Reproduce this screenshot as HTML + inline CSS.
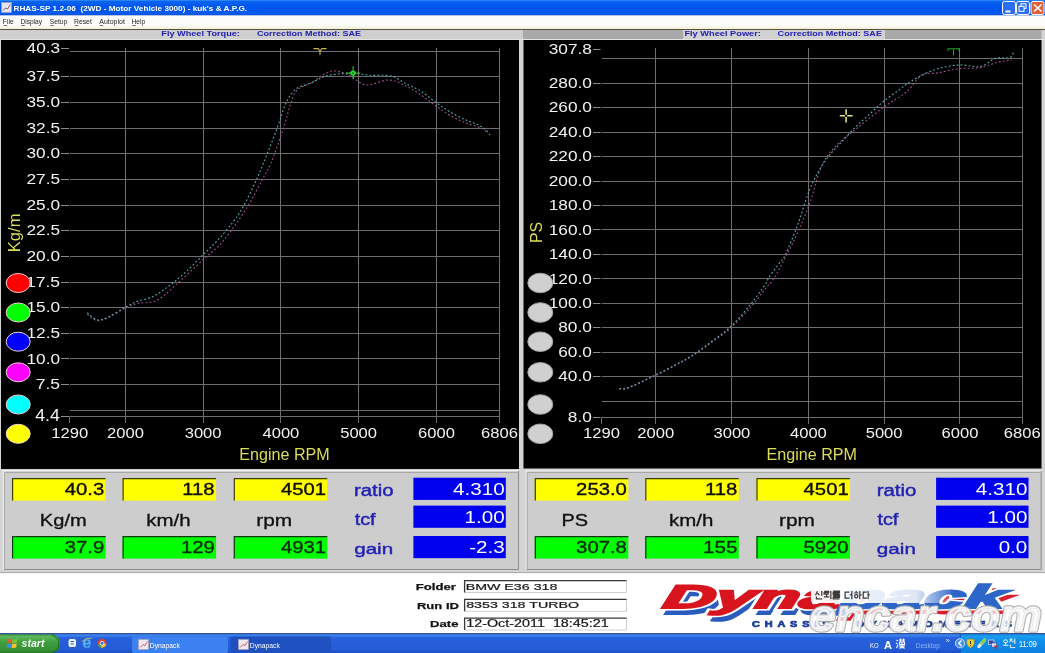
<!DOCTYPE html>
<html><head><meta charset="utf-8"><style>
html,body{margin:0;padding:0;background:#d4d4d4;overflow:hidden;}
svg{display:block;will-change:transform;}
text{font-family:"Liberation Sans", sans-serif;}
</style></head><body>
<svg width="1045" height="653" viewBox="0 0 1045 653">
<rect x="0" y="0" width="1045" height="653" fill="#d4d4d4"/>
<defs>
<linearGradient id="tb" x1="0" y1="0" x2="0" y2="1">
<stop offset="0" stop-color="#3d95ff"/><stop offset="0.08" stop-color="#0a66f0"/>
<stop offset="0.35" stop-color="#0058ee"/><stop offset="0.75" stop-color="#0055ea"/>
<stop offset="0.9" stop-color="#0a5ef0"/><stop offset="1" stop-color="#0040c8"/>
</linearGradient>
<linearGradient id="taskg" x1="0" y1="0" x2="0" y2="1">
<stop offset="0" stop-color="#0c2a72"/><stop offset="0.045" stop-color="#0c2a72"/><stop offset="0.07" stop-color="#3e88f2"/>
<stop offset="0.12" stop-color="#3a80ee"/><stop offset="0.25" stop-color="#2860dc"/><stop offset="0.8" stop-color="#245cd8"/>
<stop offset="1" stop-color="#1e4ec4"/>
</linearGradient>
<linearGradient id="startg" x1="0" y1="0" x2="0" y2="1">
<stop offset="0" stop-color="#3a8a3a"/><stop offset="0.12" stop-color="#5cb85c"/><stop offset="0.4" stop-color="#41a041"/>
<stop offset="0.85" stop-color="#349034"/><stop offset="1" stop-color="#2a7a2a"/>
</linearGradient>
<linearGradient id="trayg" x1="0" y1="0" x2="0" y2="1">
<stop offset="0" stop-color="#1c7ad8"/><stop offset="0.1" stop-color="#18a0f0"/>
<stop offset="0.3" stop-color="#1090ee"/><stop offset="1" stop-color="#0b80e0"/>
</linearGradient>
<linearGradient id="menug" x1="0" y1="0" x2="0" y2="1">
<stop offset="0" stop-color="#fbfdfb"/><stop offset="0.7" stop-color="#fdfdf8"/>
<stop offset="1" stop-color="#f2f0da"/>
</linearGradient>
</defs>
<rect x="0" y="0" width="1045" height="15.5" fill="url(#tb)"/>
<rect x="1.5" y="2.5" width="10" height="10" fill="#e8e4f0" stroke="#a0a0c0" stroke-width="0.6"/>
<path d="M3 10.5 L5.5 8 L7.5 9 L10.5 4.5" stroke="#806070" stroke-width="1" fill="none"/>
<text x="13.47" y="10.82" font-size="7.68" fill="#ffffff" font-weight="bold" textLength="233.67" lengthAdjust="spacingAndGlyphs" xml:space="preserve">RHAS-SP 1.2-06  (2WD - Motor Vehicle 3000) - kuk's &amp; A.P.G.</text>
<rect x="1002.5" y="1.5" width="13" height="13" rx="2" fill="#2a6ef5" stroke="#ffffff" stroke-width="1"/>
<rect x="1016.5" y="1.5" width="13" height="13" rx="2" fill="#2a6ef5" stroke="#ffffff" stroke-width="1"/>
<rect x="1031.0" y="1.5" width="13" height="13" rx="2" fill="#e0603a" stroke="#ffffff" stroke-width="1"/>
<rect x="1005.5" y="10.5" width="5" height="2" fill="#ffffff"/>
<rect x="1021" y="3.8" width="5" height="4.5" fill="none" stroke="#ffffff" stroke-width="1"/>
<rect x="1019" y="6.3" width="5" height="5" fill="#2a6ef5" stroke="#ffffff" stroke-width="1"/>
<path d="M1034 4.5 L1041.5 11.5 M1041.5 4.5 L1034 11.5" stroke="#ffffff" stroke-width="1.6"/>
<rect x="0" y="15.5" width="1045" height="13.5" fill="url(#menug)"/>
<rect x="0" y="29" width="1045" height="1" fill="#55553f"/>
<text x="2.86" y="24.10" font-size="6.67" fill="#252525" textLength="10.85" lengthAdjust="spacingAndGlyphs">File</text>
<rect x="3.6999999999999997" y="25.0" width="3.5" height="0.8" fill="#505050"/>
<text x="20.47" y="24.10" font-size="6.67" fill="#252525" textLength="21.55" lengthAdjust="spacingAndGlyphs">Display</text>
<rect x="21.3" y="25.0" width="3.5" height="0.8" fill="#505050"/>
<text x="49.70" y="24.10" font-size="6.67" fill="#252525" textLength="17.59" lengthAdjust="spacingAndGlyphs">Setup</text>
<rect x="50.3" y="25.0" width="3.5" height="0.8" fill="#505050"/>
<text x="73.95" y="24.10" font-size="6.67" fill="#252525" textLength="17.90" lengthAdjust="spacingAndGlyphs">Reset</text>
<rect x="74.8" y="25.0" width="3.5" height="0.8" fill="#505050"/>
<text x="99.27" y="24.10" font-size="6.67" fill="#252525" textLength="25.60" lengthAdjust="spacingAndGlyphs">Autoplot</text>
<rect x="99.6" y="25.0" width="3.5" height="0.8" fill="#505050"/>
<text x="131.47" y="24.10" font-size="6.67" fill="#252525" textLength="13.61" lengthAdjust="spacingAndGlyphs">Help</text>
<rect x="132.3" y="25.0" width="3.5" height="0.8" fill="#505050"/>
<rect x="0" y="30" width="1045" height="9.5" fill="#cfcfcf"/>
<rect x="523" y="30" width="522" height="9.5" fill="#a9a9a9"/>
<rect x="683" y="30" width="202" height="9.5" fill="#d2d2d2"/>
<rect x="1041.5" y="30" width="3.5" height="9.5" fill="#d4d4d4"/>
<rect x="0" y="39" width="1045" height="1" fill="#e4e4e4"/>
<text x="161.31" y="36.00" font-size="8.12" fill="#2020b4" font-weight="bold" textLength="78.59" lengthAdjust="spacingAndGlyphs">Fly Wheel Torque:</text>
<text x="257.14" y="36.00" font-size="8.12" fill="#2020b4" font-weight="bold" textLength="103.98" lengthAdjust="spacingAndGlyphs">Correction Method: SAE</text>
<text x="684.40" y="36.00" font-size="8.12" fill="#2020b4" font-weight="bold" textLength="76.52" lengthAdjust="spacingAndGlyphs">Fly Wheel Power:</text>
<text x="777.64" y="36.00" font-size="8.12" fill="#2020b4" font-weight="bold" textLength="104.29" lengthAdjust="spacingAndGlyphs">Correction Method: SAE</text>
<rect x="1" y="40" width="518" height="429" fill="#000000"/>
<rect x="523.5" y="40" width="518" height="428.5" fill="#000000"/>
<path d="M70.0 51.5H499.5 M70.0 76.5H499.5 M70.0 102.5H499.5 M70.0 128.5H499.5 M70.0 153.5H499.5 M70.0 179.5H499.5 M70.0 205.5H499.5 M70.0 230.5H499.5 M70.0 256.5H499.5 M70.0 282.5H499.5 M70.0 307.5H499.5 M70.0 333.5H499.5 M70.0 358.5H499.5 M70.0 384.5H499.5 M70.0 410.5H499.5 M69.7 416.5H499.5 M125.5 48V423.0 M203.5 48V423.0 M280.5 48V423.0 M358.5 48V423.0 M436.5 48V423.0 M499.5 48V423.0 M69.5 416.5V423.0" stroke="#6e6e6e" stroke-width="1" fill="none"/>
<path d="M61 48.5H69 M61 76.5H69 M61 102.5H69 M61 128.5H69 M61 153.5H69 M61 179.5H69 M61 205.5H69 M61 230.5H69 M61 256.5H69 M61 282.5H69 M61 307.5H69 M61 333.5H69 M61 358.5H69 M61 384.5H69 M61 416.5H69" stroke="#8c8c8c" stroke-width="1" fill="none"/>
<path d="M601.8 58.5H1022.2 M601.8 83.5H1022.2 M601.8 107.5H1022.2 M601.8 132.5H1022.2 M601.8 156.5H1022.2 M601.8 181.5H1022.2 M601.8 205.5H1022.2 M601.8 229.5H1022.2 M601.8 254.5H1022.2 M601.8 278.5H1022.2 M601.8 303.5H1022.2 M601.8 327.5H1022.2 M601.8 352.5H1022.2 M601.8 376.5H1022.2 M601.8 401.5H1022.2 M601.5 417.5H1022.2 M655.5 48V424.0 M731.5 48V424.0 M808.5 48V424.0 M884.5 48V424.0 M959.5 48V424.0 M1022.5 48V424.0 M601.5 417.5V424.0" stroke="#6e6e6e" stroke-width="1" fill="none"/>
<path d="M593 49.5H600.5 M593 83.5H600.5 M593 107.5H600.5 M593 132.5H600.5 M593 156.5H600.5 M593 181.5H600.5 M593 205.5H600.5 M593 229.5H600.5 M593 254.5H600.5 M593 278.5H600.5 M593 303.5H600.5 M593 327.5H600.5 M593 352.5H600.5 M593 376.5H600.5 M593 417.5H600.5" stroke="#8c8c8c" stroke-width="1" fill="none"/>
<text x="26.57" y="52.72" font-size="15.21" fill="#f2f2f2" textLength="33.63" lengthAdjust="spacingAndGlyphs">40.3</text>
<text x="26.48" y="81.45" font-size="15.21" fill="#f2f2f2" textLength="33.63" lengthAdjust="spacingAndGlyphs">37.5</text>
<text x="26.48" y="107.10" font-size="15.21" fill="#f2f2f2" textLength="33.63" lengthAdjust="spacingAndGlyphs">35.0</text>
<text x="26.48" y="132.75" font-size="15.21" fill="#f2f2f2" textLength="33.63" lengthAdjust="spacingAndGlyphs">32.5</text>
<text x="26.48" y="158.40" font-size="15.21" fill="#f2f2f2" textLength="33.63" lengthAdjust="spacingAndGlyphs">30.0</text>
<text x="26.48" y="184.05" font-size="15.21" fill="#f2f2f2" textLength="33.63" lengthAdjust="spacingAndGlyphs">27.5</text>
<text x="26.48" y="209.70" font-size="15.21" fill="#f2f2f2" textLength="33.63" lengthAdjust="spacingAndGlyphs">25.0</text>
<text x="26.48" y="235.35" font-size="15.21" fill="#f2f2f2" textLength="33.63" lengthAdjust="spacingAndGlyphs">22.5</text>
<text x="26.48" y="261.00" font-size="15.21" fill="#f2f2f2" textLength="33.63" lengthAdjust="spacingAndGlyphs">20.0</text>
<text x="26.01" y="286.65" font-size="15.43" fill="#f2f2f2" textLength="34.11" lengthAdjust="spacingAndGlyphs">17.5</text>
<text x="26.48" y="312.30" font-size="15.21" fill="#f2f2f2" textLength="33.63" lengthAdjust="spacingAndGlyphs">15.0</text>
<text x="26.48" y="337.95" font-size="15.21" fill="#f2f2f2" textLength="33.63" lengthAdjust="spacingAndGlyphs">12.5</text>
<text x="26.48" y="363.60" font-size="15.21" fill="#f2f2f2" textLength="33.63" lengthAdjust="spacingAndGlyphs">10.0</text>
<text x="35.74" y="389.25" font-size="15.43" fill="#f2f2f2" textLength="24.37" lengthAdjust="spacingAndGlyphs">7.5</text>
<text x="35.22" y="421.21" font-size="15.65" fill="#f2f2f2" textLength="24.72" lengthAdjust="spacingAndGlyphs">4.4</text>
<text x="548.69" y="53.85" font-size="15.21" fill="#f2f2f2" textLength="43.24" lengthAdjust="spacingAndGlyphs">307.8</text>
<text x="548.69" y="87.85" font-size="15.21" fill="#f2f2f2" textLength="43.24" lengthAdjust="spacingAndGlyphs">280.0</text>
<text x="548.69" y="112.31" font-size="15.21" fill="#f2f2f2" textLength="43.24" lengthAdjust="spacingAndGlyphs">260.0</text>
<text x="548.69" y="136.76" font-size="15.21" fill="#f2f2f2" textLength="43.24" lengthAdjust="spacingAndGlyphs">240.0</text>
<text x="548.69" y="161.22" font-size="15.21" fill="#f2f2f2" textLength="43.24" lengthAdjust="spacingAndGlyphs">220.0</text>
<text x="548.69" y="185.68" font-size="15.21" fill="#f2f2f2" textLength="43.24" lengthAdjust="spacingAndGlyphs">200.0</text>
<text x="548.69" y="210.14" font-size="15.21" fill="#f2f2f2" textLength="43.24" lengthAdjust="spacingAndGlyphs">180.0</text>
<text x="548.69" y="234.60" font-size="15.21" fill="#f2f2f2" textLength="43.24" lengthAdjust="spacingAndGlyphs">160.0</text>
<text x="548.69" y="259.05" font-size="15.21" fill="#f2f2f2" textLength="43.24" lengthAdjust="spacingAndGlyphs">140.0</text>
<text x="548.69" y="283.51" font-size="15.21" fill="#f2f2f2" textLength="43.24" lengthAdjust="spacingAndGlyphs">120.0</text>
<text x="548.69" y="307.97" font-size="15.21" fill="#f2f2f2" textLength="43.24" lengthAdjust="spacingAndGlyphs">100.0</text>
<text x="558.28" y="332.43" font-size="15.21" fill="#f2f2f2" textLength="33.63" lengthAdjust="spacingAndGlyphs">80.0</text>
<text x="558.28" y="356.89" font-size="15.21" fill="#f2f2f2" textLength="33.63" lengthAdjust="spacingAndGlyphs">60.0</text>
<text x="558.28" y="381.34" font-size="15.21" fill="#f2f2f2" textLength="33.63" lengthAdjust="spacingAndGlyphs">40.0</text>
<text x="567.87" y="421.85" font-size="15.21" fill="#f2f2f2" textLength="24.02" lengthAdjust="spacingAndGlyphs">8.0</text>
<text x="51.26" y="437.95" font-size="15.21" fill="#f2f2f2" textLength="36.89" lengthAdjust="spacingAndGlyphs">1290</text>
<text x="107.06" y="437.95" font-size="15.21" fill="#f2f2f2" textLength="36.89" lengthAdjust="spacingAndGlyphs">2000</text>
<text x="184.66" y="437.95" font-size="15.21" fill="#f2f2f2" textLength="36.89" lengthAdjust="spacingAndGlyphs">3000</text>
<text x="262.46" y="437.95" font-size="15.21" fill="#f2f2f2" textLength="36.89" lengthAdjust="spacingAndGlyphs">4000</text>
<text x="340.16" y="437.95" font-size="15.21" fill="#f2f2f2" textLength="36.89" lengthAdjust="spacingAndGlyphs">5000</text>
<text x="418.06" y="437.95" font-size="15.21" fill="#f2f2f2" textLength="36.89" lengthAdjust="spacingAndGlyphs">6000</text>
<text x="481.06" y="437.95" font-size="15.21" fill="#f2f2f2" textLength="36.89" lengthAdjust="spacingAndGlyphs">6806</text>
<text x="583.06" y="437.95" font-size="15.21" fill="#f2f2f2" textLength="36.89" lengthAdjust="spacingAndGlyphs">1290</text>
<text x="637.26" y="437.95" font-size="15.21" fill="#f2f2f2" textLength="36.89" lengthAdjust="spacingAndGlyphs">2000</text>
<text x="713.46" y="437.95" font-size="15.21" fill="#f2f2f2" textLength="36.89" lengthAdjust="spacingAndGlyphs">3000</text>
<text x="789.96" y="437.95" font-size="15.21" fill="#f2f2f2" textLength="36.89" lengthAdjust="spacingAndGlyphs">4000</text>
<text x="865.66" y="437.95" font-size="15.21" fill="#f2f2f2" textLength="36.89" lengthAdjust="spacingAndGlyphs">5000</text>
<text x="941.52" y="437.95" font-size="15.21" fill="#f2f2f2" textLength="36.89" lengthAdjust="spacingAndGlyphs">6000</text>
<text x="1003.76" y="437.95" font-size="15.21" fill="#f2f2f2" textLength="36.89" lengthAdjust="spacingAndGlyphs">6806</text>
<text x="239.21" y="459.50" font-size="16.81" fill="#dcdc58" textLength="90.54" lengthAdjust="spacingAndGlyphs">Engine RPM</text>
<text x="766.51" y="459.50" font-size="16.67" fill="#dcdc58" textLength="90.44" lengthAdjust="spacingAndGlyphs">Engine RPM</text>
<text transform="translate(19.80 252.23) rotate(-90)" font-size="17.10" fill="#dcdc58" textLength="38.67" lengthAdjust="spacingAndGlyphs">Kg/m</text>
<text transform="translate(541.90 242.97) rotate(-90)" font-size="16.67" fill="#dcdc58" textLength="21.15" lengthAdjust="spacingAndGlyphs">PS</text>
<ellipse cx="18.2" cy="283" rx="12" ry="9.5" fill="#ff0000" stroke="#f0d0d0" stroke-width="1"/>
<ellipse cx="18.2" cy="312.5" rx="12" ry="9.5" fill="#00ff00" stroke="#f0d0d0" stroke-width="1"/>
<ellipse cx="18.2" cy="341.7" rx="12" ry="9.5" fill="#0000ff" stroke="#f0d0d0" stroke-width="1"/>
<ellipse cx="18.2" cy="372.3" rx="12" ry="9.5" fill="#ff00ff" stroke="#f0d0d0" stroke-width="1"/>
<ellipse cx="18.2" cy="404.5" rx="12" ry="9.5" fill="#00ffff" stroke="#f0d0d0" stroke-width="1"/>
<ellipse cx="18.2" cy="433.8" rx="12" ry="9.5" fill="#ffff00" stroke="#f0d0d0" stroke-width="1"/>
<ellipse cx="540.3" cy="283" rx="12.5" ry="9.8" fill="#d0d0d0" stroke="#a0a0a0" stroke-width="1"/>
<ellipse cx="540.3" cy="312.5" rx="12.5" ry="9.8" fill="#d0d0d0" stroke="#a0a0a0" stroke-width="1"/>
<ellipse cx="540.3" cy="341.7" rx="12.5" ry="9.8" fill="#d0d0d0" stroke="#a0a0a0" stroke-width="1"/>
<ellipse cx="540.3" cy="372.3" rx="12.5" ry="9.8" fill="#d0d0d0" stroke="#a0a0a0" stroke-width="1"/>
<ellipse cx="540.3" cy="404.5" rx="12.5" ry="9.8" fill="#d0d0d0" stroke="#a0a0a0" stroke-width="1"/>
<ellipse cx="540.3" cy="433.8" rx="12.5" ry="9.8" fill="#d0d0d0" stroke="#a0a0a0" stroke-width="1"/>
<path d="M87.3 314.5 C89.0 315.5 93.6 320.0 97.2 320.5 C100.8 321.0 104.0 319.6 108.7 317.5 C113.4 315.4 120.6 310.3 125.4 308.0 C130.2 305.7 132.2 304.8 137.4 303.5 C142.6 302.2 150.2 303.5 156.6 300.4 C163.0 297.3 167.7 292.0 175.7 285.0 C183.7 278.0 196.4 265.9 204.4 258.5 C212.4 251.1 216.3 249.2 223.5 240.5 C230.7 231.8 241.2 216.6 247.6 206.5 C254.0 196.4 258.1 187.2 262.0 180.0 C265.9 172.8 267.4 171.7 271.0 163.0 C274.6 154.3 280.2 138.0 283.5 128.0 C286.8 118.0 288.7 109.3 291.0 103.0 C293.3 96.7 293.9 93.3 297.2 90.0 C300.6 86.7 305.4 86.1 311.0 83.0 C316.6 79.9 324.8 72.6 331.0 71.2 C337.2 69.9 342.7 72.7 348.5 75.0 C354.3 77.3 359.3 84.2 366.0 85.0 C372.7 85.8 381.8 79.8 388.5 80.0 C395.2 80.2 400.6 83.5 406.0 86.0 C411.4 88.5 416.0 91.7 421.0 95.0 C426.0 98.3 431.0 102.5 436.0 106.0 C441.0 109.5 446.0 113.2 451.0 116.0 C456.0 118.8 461.0 121.0 466.0 123.0 C471.0 125.0 477.3 126.3 481.0 128.0 C484.7 129.7 486.8 132.2 488.0 133.0" stroke="#a0508e" stroke-width="1.1" fill="none" stroke-dasharray="1.8 2.2"/>
<path d="M87.3 312.8 C89.0 314.0 93.6 319.2 97.2 319.9 C100.8 320.5 104.0 318.8 108.7 316.7 C113.4 314.6 120.6 309.7 125.4 307.1 C130.2 304.5 133.2 302.9 137.4 301.3 C141.6 299.7 146.7 299.2 150.8 297.5 C155.0 295.8 158.5 293.4 162.3 290.8 C166.1 288.2 169.7 285.6 173.8 282.2 C178.0 278.8 182.4 275.2 187.2 270.7 C192.0 266.2 197.4 260.5 202.5 255.4 C207.6 250.3 212.7 245.7 217.8 240.1 C222.9 234.5 228.9 227.4 233.1 221.9 C237.3 216.4 239.3 213.5 243.0 207.0 C246.7 200.5 251.6 190.3 255.0 183.0 C258.4 175.7 259.8 172.2 263.5 163.0 C267.2 153.8 273.5 138.0 277.2 128.0 C281.0 118.0 282.9 109.5 286.0 103.0 C289.1 96.5 291.8 92.3 296.0 89.0 C300.2 85.7 306.0 85.2 311.0 83.0 C316.0 80.8 320.6 77.6 326.0 76.0 C331.4 74.4 339.0 74.0 343.5 73.5 C348.0 73.0 348.7 72.7 353.0 73.0 C357.3 73.3 363.0 74.7 369.3 75.2 C375.6 75.7 384.9 74.6 391.0 76.0 C397.1 77.4 401.0 81.2 406.0 83.8 C411.0 86.3 416.0 88.1 421.0 91.2 C426.0 94.4 431.0 99.0 436.0 102.5 C441.0 106.0 446.0 109.6 451.0 112.5 C456.0 115.4 461.4 117.9 466.0 120.0 C470.6 122.1 475.2 123.3 478.5 125.0 C481.8 126.7 484.1 128.3 486.0 130.0 C487.9 131.7 489.3 134.2 490.0 135.0" stroke="#5aacac" stroke-width="1.1" fill="none" stroke-dasharray="1.8 2.2"/>
<path d="M619.3 389.0 C620.7 388.9 622.5 390.1 627.9 388.2 C633.3 386.3 643.6 381.3 651.5 377.5 C659.4 373.7 668.2 369.2 675.0 365.6 C681.8 362.0 686.1 359.9 692.2 356.0 C698.3 352.1 705.1 347.2 711.5 342.5 C717.9 337.8 724.4 333.8 730.8 328.0 C737.2 322.2 744.4 314.5 750.1 308.0 C755.8 301.5 761.0 294.2 765.1 289.0 C769.2 283.8 769.7 285.4 774.7 277.0 C779.7 268.6 789.1 250.8 794.9 238.5 C800.7 226.2 805.3 215.2 809.6 203.5 C813.9 191.8 816.6 177.8 820.6 168.6 C824.6 159.4 827.1 155.4 833.5 148.4 C839.9 141.4 850.6 133.4 859.2 126.4 C867.8 119.4 877.0 112.0 885.0 106.2 C893.0 100.4 900.9 96.7 907.0 91.5 C913.1 86.3 916.8 78.0 921.7 74.9 C926.6 71.8 930.3 74.1 936.4 73.1 C942.5 72.1 951.1 69.6 958.5 68.7 C965.9 67.8 973.8 68.7 980.5 67.6 C987.2 66.5 993.7 63.2 998.9 62.0 C1004.1 60.8 1009.6 60.5 1011.7 60.2" stroke="#a0508e" stroke-width="1.1" fill="none" stroke-dasharray="1.8 2.2"/>
<path d="M619.3 388.6 C620.7 388.4 622.5 389.6 627.9 387.6 C633.3 385.7 643.6 380.7 651.5 376.9 C659.4 373.1 668.2 368.6 675.0 365.0 C681.8 361.4 686.1 359.3 692.2 355.4 C698.3 351.5 705.1 346.3 711.5 341.5 C717.9 336.7 724.4 332.6 730.8 326.5 C737.2 320.4 744.4 312.0 750.1 305.0 C755.8 298.0 761.9 289.4 765.1 284.7 C768.3 280.0 766.7 280.8 769.2 277.0 C771.7 273.2 777.5 265.7 780.1 262.1 C782.7 258.5 782.1 261.5 785.0 255.4 C787.9 249.3 793.8 235.4 797.5 225.4 C801.2 215.4 804.6 203.4 807.5 195.5 C810.4 187.6 812.0 183.8 815.1 177.8 C818.2 171.8 822.2 164.9 826.2 159.4 C830.2 153.9 834.1 150.1 839.0 144.7 C843.9 139.3 850.4 132.2 855.6 127.0 C860.8 121.8 865.6 117.8 870.3 113.5 C875.0 109.2 879.1 105.0 884.0 101.0 C888.9 97.0 895.1 92.8 899.7 89.5 C904.3 86.2 905.8 84.2 911.5 81.0 C917.2 77.8 926.2 72.7 934.0 70.0 C941.8 67.3 950.8 65.6 958.5 65.0 C966.2 64.4 974.4 67.6 980.5 66.5 C986.6 65.4 990.3 59.9 995.2 58.4 C1000.1 56.9 1006.9 58.8 1010.0 57.6 C1013.1 56.4 1013.0 52.1 1013.6 51.0" stroke="#5aacac" stroke-width="1.1" fill="none" stroke-dasharray="1.8 2.2"/>
<path d="M313.5 48.6 H318 L320 51 L322 48.6 H326.5 M320 51 V55" stroke="#c8b840" stroke-width="1.1" fill="none"/>
<path d="M346 73.1 H360 M353.1 66.2 V79.3" stroke="#30d030" stroke-width="1" fill="none"/><circle cx="353.1" cy="73.1" r="2" fill="none" stroke="#30e030" stroke-width="1.3"/>
<path d="M947.5 48.8 H959.5 M948 48.5 V51 M959 48.5 V51 M953.5 48.8 V55.5" stroke="#22a022" stroke-width="1.1" fill="none"/>
<path d="M839.8 115.8 H845 M847.2 115.8 H852.6 M846.1 109.2 V114.8 M846.1 116.8 V122.6" stroke="#e4e48c" stroke-width="1.6" fill="none"/>
<rect x="3" y="469" width="516" height="101" fill="#cdcdcd"/>
<path d="M3.5 570 V470.5 H519" stroke="#ececec" stroke-width="1.4" fill="none"/>
<path d="M4.5 569 V472.5 H517.5" stroke="#a8a8a8" stroke-width="1" fill="none"/>
<path d="M4 569.5 H518.5 V471" stroke="#8c8c8c" stroke-width="1" fill="none"/>
<rect x="12.1" y="478" width="93.5" height="22.6" fill="#ffff00"/>
<path d="M12.6 500.4 V478.6 H105.6" stroke="#3c3c08" stroke-width="1.2" fill="none"/>
<text x="64.78" y="494.53" font-size="16.62" fill="#0c0c0c" textLength="39.46" lengthAdjust="spacingAndGlyphs" stroke="#0c0c0c" stroke-width="0.35">40.3</text>
<rect x="12.1" y="536" width="93.5" height="22.6" fill="#00ff00"/>
<path d="M12.6 558.4 V536.6 H105.6" stroke="#0c3c0c" stroke-width="1.2" fill="none"/>
<text x="64.78" y="552.53" font-size="16.62" fill="#0a2a0a" textLength="39.46" lengthAdjust="spacingAndGlyphs" stroke="#0a2a0a" stroke-width="0.35">37.9</text>
<rect x="122.6" y="478" width="93.5" height="22.6" fill="#ffff00"/>
<path d="M123.1 500.4 V478.6 H216.1" stroke="#3c3c08" stroke-width="1.2" fill="none"/>
<text x="182.27" y="494.53" font-size="16.62" fill="#0c0c0c" textLength="32.33" lengthAdjust="spacingAndGlyphs" stroke="#0c0c0c" stroke-width="0.35">118</text>
<rect x="122.6" y="536" width="93.5" height="22.6" fill="#00ff00"/>
<path d="M123.1 558.4 V536.6 H216.1" stroke="#0c3c0c" stroke-width="1.2" fill="none"/>
<text x="180.95" y="552.53" font-size="16.62" fill="#0a2a0a" textLength="33.83" lengthAdjust="spacingAndGlyphs" stroke="#0a2a0a" stroke-width="0.35">129</text>
<rect x="233.8" y="478" width="93.5" height="22.6" fill="#ffff00"/>
<path d="M234.3 500.4 V478.6 H327.3" stroke="#3c3c08" stroke-width="1.2" fill="none"/>
<text x="280.90" y="494.53" font-size="16.62" fill="#0c0c0c" textLength="45.11" lengthAdjust="spacingAndGlyphs" stroke="#0c0c0c" stroke-width="0.35">4501</text>
<rect x="233.8" y="536" width="93.5" height="22.6" fill="#00ff00"/>
<path d="M234.3 558.4 V536.6 H327.3" stroke="#0c3c0c" stroke-width="1.2" fill="none"/>
<text x="280.90" y="552.53" font-size="16.62" fill="#0a2a0a" textLength="45.11" lengthAdjust="spacingAndGlyphs" stroke="#0a2a0a" stroke-width="0.35">4931</text>
<text x="39.89" y="525.70" font-size="16.23" fill="#101010" textLength="46.89" lengthAdjust="spacingAndGlyphs" stroke="#101010" stroke-width="0.3">Kg/m</text>
<text x="146.37" y="525.94" font-size="16.19" fill="#101010" textLength="44.30" lengthAdjust="spacingAndGlyphs" stroke="#101010" stroke-width="0.3">km/h</text>
<text x="256.24" y="526.00" font-size="16.67" fill="#101010" textLength="35.96" lengthAdjust="spacingAndGlyphs" stroke="#101010" stroke-width="0.3">rpm</text>
<text x="353.98" y="496.24" font-size="16.05" fill="#2020b4" textLength="39.65" lengthAdjust="spacingAndGlyphs" stroke="#2020b4" stroke-width="0.4">ratio</text>
<text x="354.70" y="524.54" font-size="16.19" fill="#2020b4" textLength="20.91" lengthAdjust="spacingAndGlyphs" stroke="#2020b4" stroke-width="0.4">tcf</text>
<text x="354.18" y="554.34" font-size="15.51" fill="#2020b4" textLength="38.98" lengthAdjust="spacingAndGlyphs" stroke="#2020b4" stroke-width="0.4">gain</text>
<rect x="413.4" y="477.7" width="92.4" height="22.2" fill="#0000ee"/>
<text x="453.08" y="494.93" font-size="16.9" fill="#ffffff" textLength="51.60" lengthAdjust="spacingAndGlyphs">4.310</text>
<rect x="413.4" y="505.6" width="92.4" height="22.2" fill="#0000ee"/>
<text x="464.52" y="522.83" font-size="16.9" fill="#ffffff" textLength="40.13" lengthAdjust="spacingAndGlyphs">1.00</text>
<rect x="413.4" y="536" width="92.4" height="22.2" fill="#0000ee"/>
<text x="469.26" y="553.23" font-size="16.9" fill="#ffffff" textLength="35.53" lengthAdjust="spacingAndGlyphs">-2.3</text>
<rect x="525.7" y="469" width="516" height="101" fill="#cdcdcd"/>
<path d="M526.2 570 V470.5 H1041.7" stroke="#ececec" stroke-width="1.4" fill="none"/>
<path d="M527.2 569 V472.5 H1040.2" stroke="#a8a8a8" stroke-width="1" fill="none"/>
<path d="M526.7 569.5 H1041.2 V471" stroke="#8c8c8c" stroke-width="1" fill="none"/>
<rect x="534.8000000000001" y="478" width="93.5" height="22.6" fill="#ffff00"/>
<path d="M535.3000000000001 500.4 V478.6 H628.3000000000001" stroke="#3c3c08" stroke-width="1.2" fill="none"/>
<text x="576.12" y="494.53" font-size="16.62" fill="#0c0c0c" textLength="50.74" lengthAdjust="spacingAndGlyphs" stroke="#0c0c0c" stroke-width="0.35">253.0</text>
<rect x="534.8000000000001" y="536" width="93.5" height="22.6" fill="#00ff00"/>
<path d="M535.3000000000001 558.4 V536.6 H628.3000000000001" stroke="#0c3c0c" stroke-width="1.2" fill="none"/>
<text x="576.12" y="552.53" font-size="16.62" fill="#0a2a0a" textLength="50.74" lengthAdjust="spacingAndGlyphs" stroke="#0a2a0a" stroke-width="0.35">307.8</text>
<rect x="645.3000000000001" y="478" width="93.5" height="22.6" fill="#ffff00"/>
<path d="M645.8000000000001 500.4 V478.6 H738.8000000000001" stroke="#3c3c08" stroke-width="1.2" fill="none"/>
<text x="704.97" y="494.53" font-size="16.62" fill="#0c0c0c" textLength="32.33" lengthAdjust="spacingAndGlyphs" stroke="#0c0c0c" stroke-width="0.35">118</text>
<rect x="645.3000000000001" y="536" width="93.5" height="22.6" fill="#00ff00"/>
<path d="M645.8000000000001 558.4 V536.6 H738.8000000000001" stroke="#0c3c0c" stroke-width="1.2" fill="none"/>
<text x="703.08" y="552.53" font-size="16.86" fill="#0a2a0a" textLength="34.31" lengthAdjust="spacingAndGlyphs" stroke="#0a2a0a" stroke-width="0.35">155</text>
<rect x="756.5" y="478" width="93.5" height="22.6" fill="#ffff00"/>
<path d="M757.0 500.4 V478.6 H850.0" stroke="#3c3c08" stroke-width="1.2" fill="none"/>
<text x="803.60" y="494.53" font-size="16.62" fill="#0c0c0c" textLength="45.11" lengthAdjust="spacingAndGlyphs" stroke="#0c0c0c" stroke-width="0.35">4501</text>
<rect x="756.5" y="536" width="93.5" height="22.6" fill="#00ff00"/>
<path d="M757.0 558.4 V536.6 H850.0" stroke="#0c3c0c" stroke-width="1.2" fill="none"/>
<text x="803.40" y="552.53" font-size="16.62" fill="#0a2a0a" textLength="45.11" lengthAdjust="spacingAndGlyphs" stroke="#0a2a0a" stroke-width="0.35">5920</text>
<text x="561.41" y="525.54" font-size="15.77" fill="#101010" textLength="26.57" lengthAdjust="spacingAndGlyphs" stroke="#101010" stroke-width="0.3">PS</text>
<text x="669.07" y="525.94" font-size="16.19" fill="#101010" textLength="44.30" lengthAdjust="spacingAndGlyphs" stroke="#101010" stroke-width="0.3">km/h</text>
<text x="778.94" y="526.00" font-size="16.67" fill="#101010" textLength="35.96" lengthAdjust="spacingAndGlyphs" stroke="#101010" stroke-width="0.3">rpm</text>
<text x="876.68" y="496.24" font-size="16.05" fill="#2020b4" textLength="39.65" lengthAdjust="spacingAndGlyphs" stroke="#2020b4" stroke-width="0.4">ratio</text>
<text x="877.40" y="524.54" font-size="16.19" fill="#2020b4" textLength="20.91" lengthAdjust="spacingAndGlyphs" stroke="#2020b4" stroke-width="0.4">tcf</text>
<text x="876.88" y="554.34" font-size="15.51" fill="#2020b4" textLength="38.98" lengthAdjust="spacingAndGlyphs" stroke="#2020b4" stroke-width="0.4">gain</text>
<rect x="936.1" y="477.7" width="92.4" height="22.2" fill="#0000ee"/>
<text x="975.78" y="494.93" font-size="16.9" fill="#ffffff" textLength="51.60" lengthAdjust="spacingAndGlyphs">4.310</text>
<rect x="936.1" y="505.6" width="92.4" height="22.2" fill="#0000ee"/>
<text x="987.22" y="522.83" font-size="16.9" fill="#ffffff" textLength="40.13" lengthAdjust="spacingAndGlyphs">1.00</text>
<rect x="936.1" y="536" width="92.4" height="22.2" fill="#0000ee"/>
<text x="998.66" y="553.23" font-size="16.9" fill="#ffffff" textLength="28.66" lengthAdjust="spacingAndGlyphs">0.0</text>
<rect x="0" y="572.2" width="1045" height="1" fill="#a4a4a4"/>
<rect x="0" y="573.2" width="1045" height="60.5" fill="#ffffff"/>
<text x="415.85" y="590.00" font-size="9.42" fill="#141414" font-weight="bold" textLength="40.06" lengthAdjust="spacingAndGlyphs" stroke="#141414" stroke-width="0.25">Folder</text>
<text x="416.95" y="608.90" font-size="9.71" fill="#141414" font-weight="bold" textLength="41.99" lengthAdjust="spacingAndGlyphs" stroke="#141414" stroke-width="0.25">Run ID</text>
<text x="430.05" y="626.80" font-size="9.28" fill="#141414" font-weight="bold" textLength="28.45" lengthAdjust="spacingAndGlyphs" stroke="#141414" stroke-width="0.25">Date</text>
<rect x="464" y="580" width="162.8" height="12.5" fill="#ffffff"/>
<path d="M464.5 592.5 H626.5 V580.5" stroke="#d0d0d0" stroke-width="1" fill="none"/>
<path d="M464.6 592.5 V580.6 H626.5" stroke="#383838" stroke-width="1.3" fill="none"/>
<text x="465.66" y="589.80" font-size="9.42" fill="#181818" textLength="91.74" lengthAdjust="spacingAndGlyphs" xml:space="preserve" stroke="#181818" stroke-width="0.2">BMW E36 318</text>
<rect x="464" y="598.8" width="162.8" height="12.5" fill="#ffffff"/>
<path d="M464.5 611.3 H626.5 V599.3" stroke="#d0d0d0" stroke-width="1" fill="none"/>
<path d="M464.6 611.3 V599.4 H626.5" stroke="#383838" stroke-width="1.3" fill="none"/>
<text x="466.16" y="608.20" font-size="9.42" fill="#181818" textLength="112.89" lengthAdjust="spacingAndGlyphs" xml:space="preserve" stroke="#181818" stroke-width="0.2">8353 318 TURBO</text>
<rect x="464" y="617.5" width="162.8" height="12.5" fill="#ffffff"/>
<path d="M464.5 630.0 H626.5 V618.0" stroke="#d0d0d0" stroke-width="1" fill="none"/>
<path d="M464.6 630.0 V618.1 H626.5" stroke="#383838" stroke-width="1.3" fill="none"/>
<text x="466.22" y="627.20" font-size="10.14" fill="#181818" textLength="142.53" lengthAdjust="spacingAndGlyphs" xml:space="preserve" stroke="#181818" stroke-width="0.2">12-Oct-2011  18:45:21</text>
<text x="795.60" y="614.20" font-size="32.6" font-weight="bold" font-style="italic" fill="#2b5bbd" textLength="176.98" lengthAdjust="spacingAndGlyphs" transform="skewX(-12)" stroke="#2b5bbd" stroke-width="2.2">Dyna</text>
<text x="972.37" y="613.20" font-size="32.6" font-weight="bold" font-style="italic" fill="#d42030" textLength="164.96" lengthAdjust="spacingAndGlyphs" transform="skewX(-12)" stroke="#d42030" stroke-width="2.2">pack</text>
<text x="790.72" y="607.70" font-size="32.6" font-weight="bold" font-style="italic" fill="#ffffff" textLength="176.98" lengthAdjust="spacingAndGlyphs" transform="skewX(-12)" stroke="#ffffff" stroke-width="5">Dyna</text>
<text x="967.70" y="607.70" font-size="32.6" font-weight="bold" font-style="italic" fill="#ffffff" textLength="164.96" lengthAdjust="spacingAndGlyphs" transform="skewX(-12)" stroke="#ffffff" stroke-width="5">pack</text>
<text x="790.72" y="607.70" font-size="32.6" font-weight="bold" font-style="italic" fill="#d8141e" textLength="176.98" lengthAdjust="spacingAndGlyphs" transform="skewX(-12)" stroke="#d8141e" stroke-width="2">Dyna</text>
<text x="967.70" y="607.70" font-size="32.6" font-weight="bold" font-style="italic" fill="#2d66c8" textLength="164.96" lengthAdjust="spacingAndGlyphs" transform="skewX(-12)" stroke="#2d66c8" stroke-width="2">pack</text>
<defs><linearGradient id="tagg" x1="0" y1="0" x2="1" y2="0"><stop offset="0" stop-color="#ffffff" stop-opacity="0.95"/><stop offset="0.75" stop-color="#ffffff" stop-opacity="0.85"/><stop offset="1" stop-color="#ffffff" stop-opacity="0.1"/></linearGradient></defs>
<rect x="811" y="583" width="140" height="20" rx="3" fill="url(#tagg)"/>
<path d="M817.48 591.24 L815.50 595.27 M817.48 593.08 L819.46 595.27 M821.74 590.90 L821.74 596.11 M816.42 596.61 L816.42 598.96 L822.19 598.96 M824.12 591.32 L828.60 591.32 L828.60 592.66 L824.12 592.66 L824.12 594.01 L828.76 594.01 M826.52 594.76 L826.52 596.44 M823.80 596.78 L829.40 596.78 M830.84 590.90 L830.84 599.30 M833.21 591.15 L839.44 591.15 L839.44 592.41 L833.21 592.41 L833.21 593.67 L839.59 593.67 M832.60 594.93 L840.20 594.93 M833.21 596.11 L839.44 596.11 L839.44 597.45 L833.21 597.45 L833.21 598.88 L839.59 598.88 M849.30 592.08 L845.10 592.08 L845.10 598.12 L849.47 598.12 M851.82 590.90 L851.82 599.30 M849.81 594.93 L851.82 594.93 M856.24 590.90 L856.24 591.91 M854.32 592.92 L858.16 592.92 M859.76 590.90 L859.76 599.30 M859.76 594.93 L861.68 594.93 M866.65 592.08 L863.24 592.08 L863.24 598.12 L866.94 598.12 M868.13 590.90 L868.13 599.30 M868.13 594.93 L869.90 594.93" stroke="#3c3c3c" stroke-width="1.25" fill="none"/><ellipse cx="856.24" cy="596.28" rx="1.60" ry="1.68" fill="none" stroke="#3c3c3c" stroke-width="1.25"/>
<text x="752.07" y="626.90" font-size="8.70" font-weight="bold" fill="#1c3c98" stroke="#1c3c98" stroke-width="0.7" textLength="7.85" lengthAdjust="spacingAndGlyphs">C</text><text x="764.75" y="626.90" font-size="8.70" font-weight="bold" fill="#1c3c98" stroke="#1c3c98" stroke-width="0.7" textLength="7.85" lengthAdjust="spacingAndGlyphs">H</text><text x="777.44" y="626.90" font-size="8.70" font-weight="bold" fill="#1c3c98" stroke="#1c3c98" stroke-width="0.7" textLength="7.85" lengthAdjust="spacingAndGlyphs">A</text><text x="790.12" y="626.90" font-size="8.70" font-weight="bold" fill="#1c3c98" stroke="#1c3c98" stroke-width="0.7" textLength="7.25" lengthAdjust="spacingAndGlyphs">S</text><text x="802.21" y="626.90" font-size="8.70" font-weight="bold" fill="#1c3c98" stroke="#1c3c98" stroke-width="0.7" textLength="7.25" lengthAdjust="spacingAndGlyphs">S</text><text x="814.30" y="626.90" font-size="8.70" font-weight="bold" fill="#1c3c98" stroke="#1c3c98" stroke-width="0.7" textLength="3.02" lengthAdjust="spacingAndGlyphs">I</text><text x="822.15" y="626.90" font-size="8.70" font-weight="bold" fill="#1c3c98" stroke="#1c3c98" stroke-width="0.7" textLength="7.25" lengthAdjust="spacingAndGlyphs">S</text>
<text x="856.29" y="626.90" font-size="8.70" font-weight="bold" fill="#1c3c98" stroke="#1c3c98" stroke-width="0.7" textLength="7.85" lengthAdjust="spacingAndGlyphs">D</text><text x="869.79" y="626.90" font-size="8.70" font-weight="bold" fill="#1c3c98" stroke="#1c3c98" stroke-width="0.7" textLength="7.25" lengthAdjust="spacingAndGlyphs">Y</text><text x="882.69" y="626.90" font-size="8.70" font-weight="bold" fill="#1c3c98" stroke="#1c3c98" stroke-width="0.7" textLength="7.85" lengthAdjust="spacingAndGlyphs">N</text><text x="896.18" y="626.90" font-size="8.70" font-weight="bold" fill="#1c3c98" stroke="#1c3c98" stroke-width="0.7" textLength="7.85" lengthAdjust="spacingAndGlyphs">A</text><text x="909.68" y="626.90" font-size="8.70" font-weight="bold" fill="#1c3c98" stroke="#1c3c98" stroke-width="0.7" textLength="9.05" lengthAdjust="spacingAndGlyphs">M</text><text x="924.38" y="626.90" font-size="8.70" font-weight="bold" fill="#1c3c98" stroke="#1c3c98" stroke-width="0.7" textLength="8.45" lengthAdjust="spacingAndGlyphs">O</text><text x="938.48" y="626.90" font-size="8.70" font-weight="bold" fill="#1c3c98" stroke="#1c3c98" stroke-width="0.7" textLength="9.05" lengthAdjust="spacingAndGlyphs">M</text><text x="953.18" y="626.90" font-size="8.70" font-weight="bold" fill="#1c3c98" stroke="#1c3c98" stroke-width="0.7" textLength="7.25" lengthAdjust="spacingAndGlyphs">E</text><text x="966.07" y="626.90" font-size="8.70" font-weight="bold" fill="#1c3c98" stroke="#1c3c98" stroke-width="0.7" textLength="6.64" lengthAdjust="spacingAndGlyphs">T</text><text x="978.36" y="626.90" font-size="8.70" font-weight="bold" fill="#1c3c98" stroke="#1c3c98" stroke-width="0.7" textLength="7.25" lengthAdjust="spacingAndGlyphs">E</text><text x="991.26" y="626.90" font-size="8.70" font-weight="bold" fill="#1c3c98" stroke="#1c3c98" stroke-width="0.7" textLength="7.85" lengthAdjust="spacingAndGlyphs">R</text><text x="1004.75" y="626.90" font-size="8.70" font-weight="bold" fill="#1c3c98" stroke="#1c3c98" stroke-width="0.7" textLength="7.25" lengthAdjust="spacingAndGlyphs">S</text>
<text x="809.58" y="631.01" font-size="44.83" font-weight="bold" font-style="italic" fill="none" stroke="#a8a8a8" stroke-width="3.6" stroke-linejoin="round" stroke-opacity="0.9" textLength="232.00" lengthAdjust="spacingAndGlyphs">encar.com</text>
<text x="809.58" y="631.01" font-size="44.83" font-weight="bold" font-style="italic" fill="#ffffff" stroke="#ffffff" stroke-width="1.6" stroke-linejoin="round" fill-opacity="0.72" stroke-opacity="0.72" textLength="232.00" lengthAdjust="spacingAndGlyphs">encar.com</text>
<rect x="0" y="633.2" width="1045" height="19.8" fill="url(#taskg)"/>
<path d="M0 634.2 H50 Q60 634.2 60 643.6 Q60 653 50 653 H0 Z" fill="url(#startg)"/>
<path d="M52 635 Q59 637 59 643.6 Q59 651 52 652.5" stroke="#1f6a1f" stroke-width="1.5" fill="none" opacity="0.7"/>
<g transform="translate(7.2 638.6) skewX(-6)"><path d="M0.5 0.8 Q2.5 0 4.6 0.6 V4.4 Q2.5 3.8 0.5 4.6 Z" fill="#f05a28"/><path d="M5.4 0.6 Q7.8 1.2 10 0.4 V4.2 Q7.8 5 5.4 4.4 Z" fill="#7cc242"/><path d="M0.5 5.4 Q2.5 4.6 4.6 5.2 V9.2 Q2.5 8.6 0.5 9.4 Z" fill="#3b8ee8"/><path d="M5.4 5.2 Q7.8 5.8 10 5 V9 Q7.8 9.8 5.4 9.2 Z" fill="#fbc02d"/></g>
<text x="21.64" y="647.30" font-size="10.23" fill="#ffffff" font-weight="bold" font-style="italic" textLength="22.82" lengthAdjust="spacingAndGlyphs" fill-opacity="0.95">start</text>
<rect x="68" y="638.5" width="8.5" height="9" rx="2.5" fill="#f0f6ff" stroke="#2a58b8" stroke-width="1"/><path d="M70.5 641.5 h3.5 M70.5 644 h3.5" stroke="#2a58b8" stroke-width="1"/>
<text x="82.24" y="648.03" font-size="17.09" fill="#5ab4f6" font-weight="bold" textLength="9.15" lengthAdjust="spacingAndGlyphs" stroke="#3a8ad8" stroke-width="0.4">e</text>
<path d="M81.8 641.5 Q86 637.2 92.2 638.2" stroke="#e8b840" stroke-width="0.8" fill="none"/>
<circle cx="102" cy="643.3" r="4.5" fill="#e04030"/><path d="M102 643.3 L97.6 644.5 A4.5 4.5 0 0 0 101 647.7 Z" fill="#40a050"/><path d="M102 643.3 L101 647.7 A4.5 4.5 0 0 0 106.4 644.3 Z" fill="#f0c030"/><circle cx="102" cy="643.3" r="2" fill="#3a78e0" stroke="#ffffff" stroke-width="0.8"/>
<rect x="132" y="636.5" width="96" height="16.5" rx="2" fill="#3c81f2"/>
<rect x="230.6" y="636.5" width="100.4" height="16.5" rx="2" fill="#1e50c0"/>
<rect x="138.5" y="639.5" width="10" height="10" fill="#f0e8f0" stroke="#b0a0b0" stroke-width="0.6"/>
<path d="M140.0 647.5 L143.0 644.5 L145.0 645.5 L147.5 641.5" stroke="#d06060" stroke-width="1" fill="none"/>
<text x="149.80" y="647.60" font-size="8" fill="#ffffff" textLength="30.00" lengthAdjust="spacingAndGlyphs">Dynapack</text>
<rect x="238.5" y="639.5" width="10" height="10" fill="#f0e8f0" stroke="#b0a0b0" stroke-width="0.6"/>
<path d="M240.0 647.5 L243.0 644.5 L245.0 645.5 L247.5 641.5" stroke="#d06060" stroke-width="1" fill="none"/>
<text x="249.80" y="647.60" font-size="8" fill="#ffffff" textLength="30.00" lengthAdjust="spacingAndGlyphs">Dynapack</text>
<text x="870.00" y="647.50" font-size="8" fill="#ffffff" textLength="8.50" lengthAdjust="spacingAndGlyphs">KO</text>
<text x="884.00" y="648.50" font-size="11" fill="#ffffff" font-weight="bold" textLength="8.00" lengthAdjust="spacingAndGlyphs">A</text>
<path d="M896.5 640l1.5 1M896 643l1.5 1M896.5 648l1.5-3M899 640h6M900.5 638.5v3M903.5 638.5v3M899.5 642h5v2.5h-5zM899 646h6M902 642v6.5M899.5 648.5l2.5-2.5l2.5 2.5" stroke="#ffffff" stroke-width="1.1" fill="none"/>
<text x="915.80" y="647.50" font-size="8" fill="#8fb8f0" textLength="24.00" lengthAdjust="spacingAndGlyphs">Desktop</text>
<text x="945.50" y="643.00" font-size="8" fill="#cfe0ff">»</text>
<rect x="959.7" y="634.2" width="85.3" height="18.8" fill="url(#trayg)"/>
<path d="M960.2 634.2 V653" stroke="#0a4ab8" stroke-width="1"/>
<circle cx="960" cy="643.3" r="4.6" fill="#4a90e8" stroke="#c8e0ff" stroke-width="1"/><path d="M961.5 640.6 L958.8 643.3 L961.5 646" stroke="#ffffff" stroke-width="1.4" fill="none"/>
<path d="M966.8 639.6 Q970.5 638.6 974.2 639.6 V643.5 Q973.5 646.8 970.5 648 Q967.5 646.8 966.8 643.5 Z" fill="#f0d030" stroke="#a08010" stroke-width="0.5"/><path d="M970.5 641 V644.2 M970.5 645.2 V646" stroke="#303010" stroke-width="1"/>
<path d="M978.8 646.6 L984.6 640" stroke="#e8e8e8" stroke-width="3.2" stroke-linecap="round"/><path d="M981.8 643.2 L984.6 640" stroke="#8ad040" stroke-width="3.2" stroke-linecap="round"/>
<rect x="988.5" y="640" width="5.5" height="4.5" fill="#3050a0" stroke="#e0e0ff" stroke-width="0.7"/><rect x="991.5" y="643" width="5" height="4" fill="#e0e0f0" stroke="#404080" stroke-width="0.6"/><path d="M994.5 645.5 l3 3 M997.5 645.5 l-3 3" stroke="#e02020" stroke-width="1.2"/>
<path d="M1003.7 641.3a2 1.5 0 1 0 4 0a2 1.5 0 1 0 -4 0M1005.7 642.8v2.2M1003 645.3h5.4M1009.6 639.2h3M1011.1 639.2l-1.5 3.2M1011.1 639.2l1.5 3.2M1014.8 638.5v5.7M1013.3 641.2h1.5M1010.4 644.5v3.1h4.9" stroke="#ffffff" stroke-width="0.9" fill="none"/>
<text x="1019.05" y="646.71" font-size="9.3" fill="#ffffff" textLength="17.70" lengthAdjust="spacingAndGlyphs">11:09</text>
</svg>
</body></html>
